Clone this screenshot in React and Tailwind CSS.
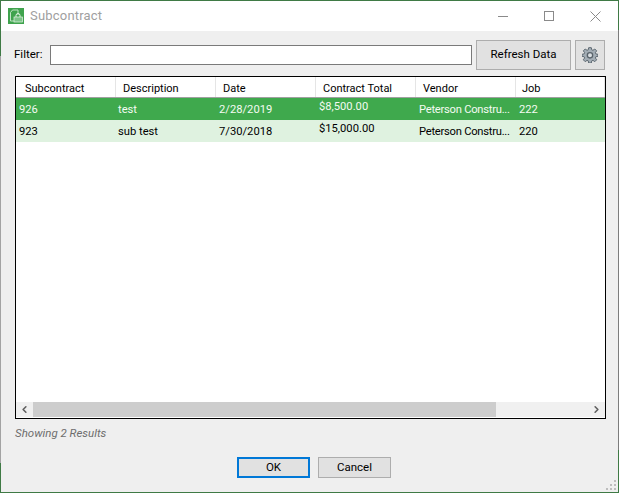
import { ChevronLeft, ChevronRight } from 'lucide-react';

const columns = [
  { label: 'Subcontract', width: 'w-[100px] pl-[9px]' },
  { label: 'Description', width: 'w-[100px] pl-[7px]' },
  { label: 'Date', width: 'w-[100px] pl-[7px]' },
  { label: 'Contract Total', width: 'w-[100px] pl-[7px]' },
  { label: 'Vendor', width: 'w-[100px] pl-[7px]' },
  { label: 'Job', width: 'w-[89px] pl-[6px]' },
];

const rows = [
  { id: '926', desc: 'test', date: '2/28/2019', total: '$8,500.00', vendor: 'Peterson Constru...', job: '222', selected: true },
  { id: '923', desc: 'sub test', date: '7/30/2018', total: '$15,000.00', vendor: 'Peterson Constru...', job: '220', selected: false },
];

const AppIcon = () => (
  <svg width="16" height="16" viewBox="0 0 16 16" className="shrink-0">
    <rect width="16" height="16" fill="#3fa34d" />
    <path d="M2.500 13V4.500L4.500 2h5.500v5M2.500 13h3.500" fill="none" stroke="#bfe2c4" strokeWidth="1" />
    <rect x="6" y="9" width="8.500" height="5" fill="#7cc488" stroke="#e4f3e6" strokeWidth="0.7" />
    <path d="M8 9V7.500a2 2 0 0 1 4 0V9" fill="none" stroke="#e4f3e6" strokeWidth="1" />
  </svg>
);

const GearIcon = () => (
  <svg width="16" height="16" viewBox="0 0 24 24">
    <path
      d="M10 1h4l.6 3.200 1.800.8L19.200 3 22 5.800l-2 2.800.8 1.800L24 11v3l-3.200.6-.8 1.800 2 2.800-2.800 2.800-2.800-2-1.800.8L14 24h-4l-.6-3.200-1.800-.8-2.800 2L2 19.200l2-2.800-.8-1.800L0 14v-3l3.200-.6.8-1.800-2-2.800L4.800 3l2.800 2 1.800-.8z"
      fill="#a3adb5"
      stroke="#5f6a73"
      strokeWidth="1.500"
    />
    <circle cx="12" cy="12.500" r="4" fill="#d9dee2" stroke="#59636b" strokeWidth="2" />
  </svg>
);

const App = () => {
  return (
    <div className="flex w-[619px] h-[493px] overflow-hidden bg-[#efefef] text-[11.500px] text-black font-['Roboto',sans-serif]">
      <div className="flex flex-col w-px shrink-0">
        <div className="h-[56px] bg-[#3f7a45]" />
        <div className="flex-1 bg-[#a3a3a3]" />
        <div className="h-[30px] bg-[#3f7a45]" />
      </div>

      <div className="flex flex-col flex-1 min-w-0 border-t border-b border-[#3f7a45]">
        <div className="flex items-center h-[30px] bg-white shrink-0 pl-[7px]">
          <AppIcon />
          <span className="ml-[6px] text-[#a0a0a0] text-[13px] tracking-[0.2px]">Subcontract</span>
          <div className="flex items-center ml-auto">
            <div className="w-[46px] flex justify-center">
              <div className="w-[10px] h-px bg-[#8a8a8a]" />
            </div>
            <div className="w-[46px] flex justify-center">
              <div className="w-[10px] h-[10px] border border-[#8a8a8a]" />
            </div>
            <div className="w-[46px] flex justify-center">
              <svg width="11" height="11" viewBox="0 0 11 11">
                <path d="M0.500 0.500l10 10M10.500 0.500l-10 10" stroke="#8a8a8a" strokeWidth="1" />
              </svg>
            </div>
          </div>
        </div>

        <div className="flex items-center h-[30px] mt-[9px] pl-[13px] shrink-0">
          <span className="w-[36px]">Filter:</span>
          <input className="h-[20px] w-[422px] bg-white border border-[#7a7a7a] outline-none" />
          <button className="ml-[4px] w-[95px] h-[30px] bg-[#e1e1e1] border border-[#adadad]">Refresh Data</button>
          <button className="ml-[4px] w-[30px] h-[30px] bg-[#e1e1e1] border border-[#adadad] flex items-center justify-center">
            <GearIcon />
          </button>
        </div>

        <div className="flex flex-col h-[343px] w-[591px] mt-[6px] ml-[14px] bg-white border border-black shrink-0">
          <div className="flex h-[21px] border-b border-[#a0a0a0] shrink-0">
            {columns.map((col) => (
              <div key={col.label} className={`${col.width} pt-[4px] border-r border-[#e5e5e5] whitespace-nowrap text-[11px]`}>
                {col.label}
              </div>
            ))}
          </div>
          {rows.map((row) => (
            <div
              key={row.id}
              className={`flex h-[22px] items-center whitespace-nowrap text-[11.200px] ${row.selected ? 'bg-[#3fa94d] text-[#f4fbf2]' : 'bg-[#dff2e0] text-black'}`}
            >
              <div className="w-[100px] pl-[3px] pt-[3px]">{row.id}</div>
              <div className="w-[100px] pl-[2px] pt-[3px]">{row.desc}</div>
              <div className="w-[100px] pl-[3px] pt-[3px]">{row.date}</div>
              <div className="w-[100px] pl-[3px] pb-[4px]">{row.total}</div>
              <div className="w-[100px] pl-[3px] pt-[3px] tracking-[-0.250px]">{row.vendor}</div>
              <div className="w-[89px] pl-[3px] pt-[3px]">{row.job}</div>
            </div>
          ))}
          <div className="flex-1" />
          <div className="flex items-center h-[15px] mb-px bg-[#f0f0f0] shrink-0">
            <div className="w-[17px] flex justify-center">
              <ChevronLeft size={11} strokeWidth={3.500} color="#606060" />
            </div>
            <div className="w-[463px] h-[15px] bg-[#cdcdcd]" />
            <div className="flex-1" />
            <div className="w-[17px] flex justify-center">
              <ChevronRight size={11} strokeWidth={3.500} color="#606060" />
            </div>
          </div>
        </div>

        <div className="ml-[14px] mt-[6px] italic leading-[16px] text-[#6d6d6d] shrink-0">Showing 2 Results</div>

        <div className="flex ml-[236px] mt-[16px] gap-[8px] shrink-0">
          <button className="w-[73px] h-[21px] bg-[#e1e1e1] border-2 border-[#0078d7]">OK</button>
          <button className="w-[73px] h-[21px] bg-[#e1e1e1] border border-[#adadad]">Cancel</button>
        </div>

        <div className="flex justify-end mt-auto pr-px pb-px">
          <svg width="11" height="11" viewBox="0 0 11 11">
            <path d="M8 0h2v2H8zM4 4h2v2H4zM8 4h2v2H8zM0 8h2v2H0zM4 8h2v2H4zM8 8h2v2H8z" fill="#bdbdbd" />
          </svg>
        </div>
      </div>

      <div className="flex flex-col w-px shrink-0">
        <div className="h-[30px] bg-[#3f7a45]" />
        <div className="flex-1 bg-[#7c7c7c]" />
        <div className="h-[43px] bg-[#3f7a45]" />
      </div>
    </div>
  );
};

export default App;
